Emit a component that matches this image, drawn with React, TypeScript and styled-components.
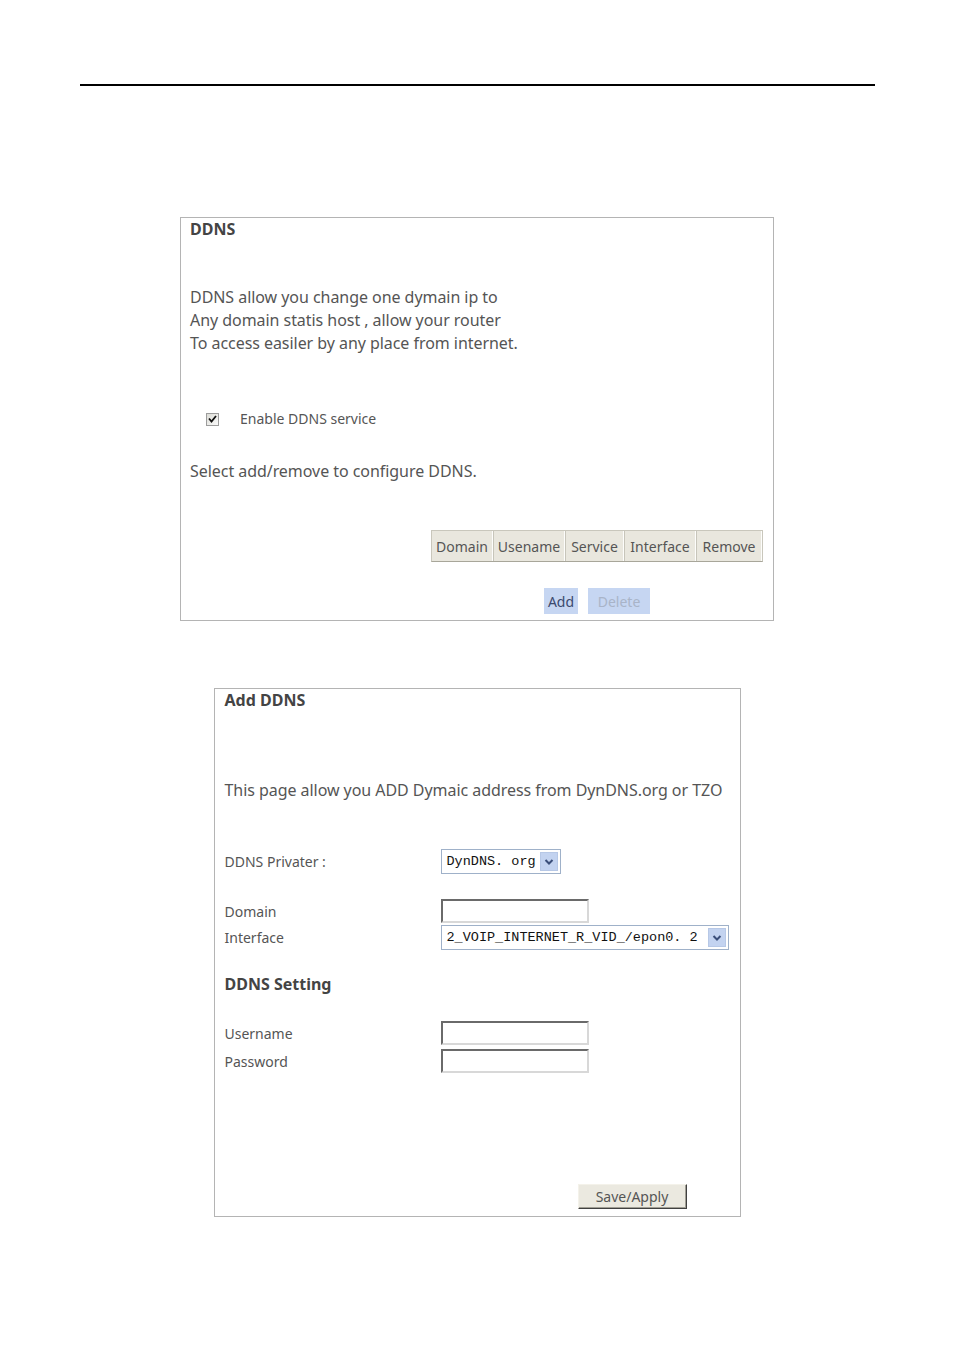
import styled, { createGlobalStyle } from 'styled-components';

const GlobalStyle = createGlobalStyle`
  html, body {
    margin: 0;
    padding: 0;
    background: #fff;
  }
  body {
    font-family: 'Noto Sans', 'DejaVu Sans', sans-serif;
    color: #555;
  }
`;

const Page = styled.div`
  width: 954px;
  height: 1350px;
  padding-top: 84px;
  box-sizing: border-box;
`;

const Rule = styled.div`
  margin: 0 79px 0 80px;
  height: 2px;
  background: #000;
`;

const Panel = styled.div<{ $width: number; $top: number; $height: number; $pad: number }>`
  width: ${(p) => p.$width}px;
  height: ${(p) => p.$height}px;
  margin: ${(p) => p.$top}px auto 0;
  border: 1px solid #b4b4b4;
  box-sizing: border-box;
  padding: 1px 10px 0 ${(p) => p.$pad}px;
  display: flex;
  flex-direction: column;
`;

const Title = styled.div`
  font-size: 16px;
  font-weight: bold;
  line-height: 20px;
  color: #444;
`;

const Text = styled.div<{ $top: number }>`
  margin-top: ${(p) => p.$top}px;
  font-size: 16px;
  line-height: 23px;
  color: #555;
  letter-spacing: -0.05px;
`;

const CheckRow = styled.label`
  margin-top: 54px;
  padding-left: 16px;
  display: flex;
  align-items: center;
  gap: 21px;
  font-size: 14px;
  line-height: 20px;
  color: #555;
`;

const CheckBox = styled.span`
  width: 13px;
  height: 13px;
  box-sizing: border-box;
  border: 1px solid #9c9c9c;
  background: linear-gradient(135deg, #dcdcd6, #fafafa);
  display: flex;
  align-items: center;
  justify-content: center;
`;

const TableRow = styled.div`
  margin-top: 47px;
  align-self: flex-end;
  display: flex;
  border: 1px solid #c9c7bc;
  border-bottom-color: #a8a69a;
  background: #e9e7de;
`;

const HeadCell = styled.div<{ $w: number }>`
  width: ${(p) => p.$w}px;
  height: 30px;
  box-sizing: border-box;
  border-left: 1px solid #c7c5ba;
  border-right: 1px solid #fdfdfb;
  display: flex;
  align-items: center;
  justify-content: center;
  font-size: 14px;
  color: #555;
  &:first-child {
    border-left: none;
  }
`;

const ButtonRow = styled.div`
  margin-top: 26px;
  display: flex;
  gap: 10px;
  padding-left: 354px;
`;

const BlueButton = styled.div<{ $disabled?: boolean; $w: number }>`
  width: ${(p) => p.$w}px;
  height: 26px;
  background: #c6d6f2;
  display: flex;
  align-items: center;
  justify-content: center;
  font-size: 14px;
  color: ${(p) => (p.$disabled ? '#a9b4c8' : '#3c4a6e')};
`;

const FormGrid = styled.div<{ $top: number; $gap: number }>`
  margin-top: ${(p) => p.$top}px;
  display: grid;
  grid-template-columns: 216px auto;
  align-items: center;
  row-gap: ${(p) => p.$gap}px;
`;

const Label = styled.div`
  font-size: 14px;
  color: #555;
`;

const Select = styled.div<{ $w: number }>`
  width: ${(p) => p.$w}px;
  height: 25px;
  box-sizing: border-box;
  border: 1px solid #9fb1c9;
  display: flex;
  align-items: center;
  justify-content: space-between;
  padding: 0 2px 0 5px;
  font-family: 'Liberation Mono', 'Noto Sans CJK SC', monospace;
  font-size: 13.5px;
  color: #111;
  background: #fff;
`;

const Arrow = styled.span`
  width: 18px;
  height: 19px;
  background: #c3d3f0;
  border: 1px solid #b7c8e6;
  box-sizing: border-box;
  display: flex;
  align-items: center;
  justify-content: center;
`;

const Input = styled.div`
  width: 148px;
  height: 24px;
  box-sizing: border-box;
  border: 2px solid;
  border-color: #6a6a6a #d8d8d8 #d8d8d8 #6a6a6a;
  background: #fff;
`;

const SubTitle = styled.div`
  margin-top: 23px;
  font-size: 16px;
  font-weight: bold;
  line-height: 22px;
  color: #444;
`;

const SaveButton = styled.div`
  margin-top: 111px;
  margin-left: 353px;
  width: 109px;
  height: 25px;
  box-sizing: border-box;
  border: 1px solid;
  border-color: #f4f2ea #404040 #404040 #f4f2ea;
  box-shadow: inset -1px -1px 0 #a09e94;
  background: #ebe9e0;
  display: flex;
  align-items: center;
  justify-content: center;
  font-size: 14px;
  color: #555;
`;

function Chevron() {
  return (
    <svg width="10" height="8" viewBox="0 0 10 8">
      <path d="M1.5 2 L5 5.5 L8.5 2" fill="none" stroke="#3b4f7a" strokeWidth="2" />
    </svg>
  );
}

const headers: [string, number][] = [
  ['Domain', 61],
  ['Usename', 72],
  ['Service', 59],
  ['Interface', 72],
  ['Remove', 66],
];

export default function App() {
  return (
    <Page>
      <GlobalStyle />
      <Rule />

      <Panel $width={594} $top={131} $height={404} $pad={9}>
        <Title>DDNS</Title>
        <Text $top={47}>
          DDNS allow you change one dymain ip to
          <br />
          Any domain statis host , allow your router
          <br />
          To access easiler by any place from internet.
        </Text>
        <CheckRow>
          <CheckBox>
            <svg width="9" height="8" viewBox="0 0 9 8">
              <path d="M1 3.5 L3.5 6.5 L8 1" fill="none" stroke="#111" strokeWidth="1.8" />
            </svg>
          </CheckBox>
          Enable DDNS service
        </CheckRow>
        <Text $top={31}>Select add/remove to configure DDNS.</Text>
        <TableRow>
          {headers.map(([h, w]) => (
            <HeadCell key={h} $w={w}>
              {h}
            </HeadCell>
          ))}
        </TableRow>
        <ButtonRow>
          <BlueButton $w={34}>Add</BlueButton>
          <BlueButton $w={62} $disabled>
            Delete
          </BlueButton>
        </ButtonRow>
      </Panel>

      <Panel $width={527} $top={67} $height={529} $pad={10}>
        <Title>Add DDNS</Title>
        <Text $top={69}>This page allow you ADD Dymaic address from DynDNS.org or TZO</Text>
        <FormGrid $top={47} $gap={3}>
          <Label>DDNS Privater :</Label>
          <Select $w={120}>
            DynDNS. org
            <Arrow>
              <Chevron />
            </Arrow>
          </Select>
        </FormGrid>
        <FormGrid $top={25} $gap={2}>
          <Label>Domain</Label>
          <Input />
          <Label>Interface</Label>
          <Select $w={288}>
            2_VOIP_INTERNET_R_VID_/epon0. 2
            <Arrow>
              <Chevron />
            </Arrow>
          </Select>
        </FormGrid>
        <SubTitle>DDNS Setting</SubTitle>
        <FormGrid $top={26} $gap={4}>
          <Label>Username</Label>
          <Input />
          <Label>Password</Label>
          <Input />
        </FormGrid>
        <SaveButton>Save/Apply</SaveButton>
      </Panel>
    </Page>
  );
}
